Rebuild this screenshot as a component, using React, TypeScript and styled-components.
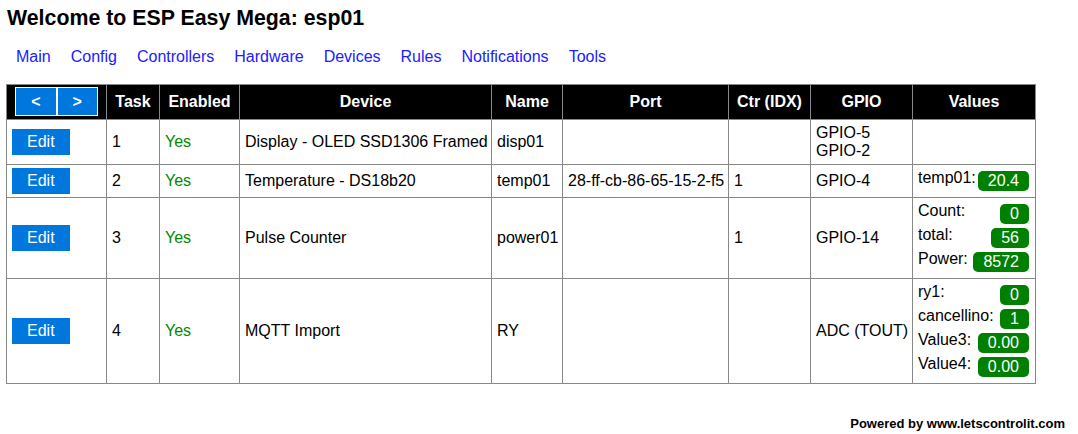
import React from 'react'
import styled, { createGlobalStyle } from 'styled-components'

const GlobalStyle = createGlobalStyle`
  html, body {
    margin: 0;
    padding: 0;
    background: #fff;
  }
  body {
    font-family: "Liberation Sans", Arial, Helvetica, sans-serif;
    font-size: 16px;
    color: #000;
  }
`

const Page = styled.div`
  padding: 0 6px;
  width: 1078px;
  box-sizing: border-box;
`

const Title = styled.h1`
  margin: 6px 0 0;
  font-size: 21.33px;
  line-height: 24px;
  font-weight: bold;
  padding-left: 1px;
`

const Menu = styled.nav`
  display: flex;
  gap: 20px;
  margin-top: 18px;
  padding-left: 10px;
  line-height: 18px;
`

const MenuLink = styled.a`
  color: #2020ff;
  text-decoration: none;
  font-size: 16px;
`

const Table = styled.table`
  margin-top: 18px;
  width: 1029px;
  table-layout: fixed;
  border-collapse: collapse;
  border: 1px solid #888;
`

const Th = styled.th`
  background: #000;
  color: #fff;
  font-weight: bold;
  text-align: center;
  border: 1px solid #888;
  padding: 2px 5px 3px;
  line-height: 18px;
  white-space: nowrap;
`

const Td = styled.td`
  border: 1px solid #888;
  padding: 4px 5px;
  line-height: 18px;
  vertical-align: middle;
  white-space: nowrap;
`

const PagerGroup = styled.div`
  display: inline-flex;
  vertical-align: middle;
`

const PagerButton = styled.a`
  display: inline-block;
  background: #0077dd;
  color: #fff;
  border: 1px solid #fff;
  padding: 5px 15px;
  line-height: 17px;
  font-weight: bold;
  cursor: pointer;
`

const EditButton = styled.a`
  display: block;
  width: fit-content;
  margin: -1px 0;
  background: #0077dd;
  color: #fff;
  padding: 4px 15px;
  line-height: 18px;
  cursor: pointer;
`

const Enabled = styled.span`
  color: #008800;
`

const ValueLine = styled.div`
  display: flex;
  justify-content: space-between;
  align-items: flex-start;
  height: 24px;
`

const ValueLabel = styled.span`
  line-height: 18px;
`

const Badge = styled.span`
  margin: 2px 1px 2px 2px;
  padding: 1px 10px;
  line-height: 18px;
  border-radius: 5px;
  background: #008000;
  color: #fff;
`

const Footer = styled.footer`
  margin-top: 32px;
  text-align: right;
  padding-right: 7px;
  font-size: 13px;
  font-weight: bold;
  line-height: 15px;
`

type Value = { label: string; value: string }

type Task = {
  task: number
  device: string
  name: string
  port: string
  ctr: string
  gpio: string[]
  values: Value[]
}

const tasks: Task[] = [
  { task: 1, device: 'Display - OLED SSD1306 Framed', name: 'disp01', port: '', ctr: '', gpio: ['GPIO-5', 'GPIO-2'], values: [] },
  { task: 2, device: 'Temperature - DS18b20', name: 'temp01', port: '28-ff-cb-86-65-15-2-f5', ctr: '1', gpio: ['GPIO-4'], values: [{ label: 'temp01:', value: '20.4' }] },
  {
    task: 3, device: 'Pulse Counter', name: 'power01', port: '', ctr: '1', gpio: ['GPIO-14'],
    values: [
      { label: 'Count:', value: '0' },
      { label: 'total:', value: '56' },
      { label: 'Power:', value: '8572' },
    ],
  },
  {
    task: 4, device: 'MQTT Import', name: 'RY', port: '', ctr: '', gpio: ['ADC (TOUT)'],
    values: [
      { label: 'ry1:', value: '0' },
      { label: 'cancellino:', value: '1' },
      { label: 'Value3:', value: '0.00' },
      { label: 'Value4:', value: '0.00' },
    ],
  },
]

const menu = ['Main', 'Config', 'Controllers', 'Hardware', 'Devices', 'Rules', 'Notifications', 'Tools']
const colWidths = [100, 53, 80, 252, 71, 166, 82, 102, 123]

const App = () => {
  return (
    <Page>
      <GlobalStyle />
      <Title>Welcome to ESP Easy Mega: esp01</Title>
      <Menu>
        {menu.map((m) => (
          <MenuLink key={m}>{m}</MenuLink>
        ))}
      </Menu>

      <Table>
        <colgroup>
          {colWidths.map((w, i) => (
            <col key={i} style={{ width: w }} />
          ))}
        </colgroup>
        <thead>
          <tr>
            <Th>
              <PagerGroup>
                <PagerButton>&lt;</PagerButton>
                <PagerButton>&gt;</PagerButton>
              </PagerGroup>
            </Th>
            <Th>Task</Th>
            <Th>Enabled</Th>
            <Th>Device</Th>
            <Th>Name</Th>
            <Th>Port</Th>
            <Th>Ctr (IDX)</Th>
            <Th>GPIO</Th>
            <Th>Values</Th>
          </tr>
        </thead>
        <tbody>
          {tasks.map((t) => (
            <tr key={t.task}>
              <Td>
                <EditButton>Edit</EditButton>
              </Td>
              <Td>{t.task}</Td>
              <Td>
                <Enabled>Yes</Enabled>
              </Td>
              <Td>{t.device}</Td>
              <Td>{t.name}</Td>
              <Td>{t.port}</Td>
              <Td>{t.ctr}</Td>
              <Td>
                {t.gpio.map((g) => (
                  <div key={g}>{g}</div>
                ))}
              </Td>
              <Td>
                {t.values.map((v) => (
                  <ValueLine key={v.label}>
                    <ValueLabel>{v.label}</ValueLabel>
                    <Badge>{v.value}</Badge>
                  </ValueLine>
                ))}
              </Td>
            </tr>
          ))}
        </tbody>
      </Table>

      <Footer>Powered by www.letscontrolit.com</Footer>
    </Page>
  )
}

export default App
